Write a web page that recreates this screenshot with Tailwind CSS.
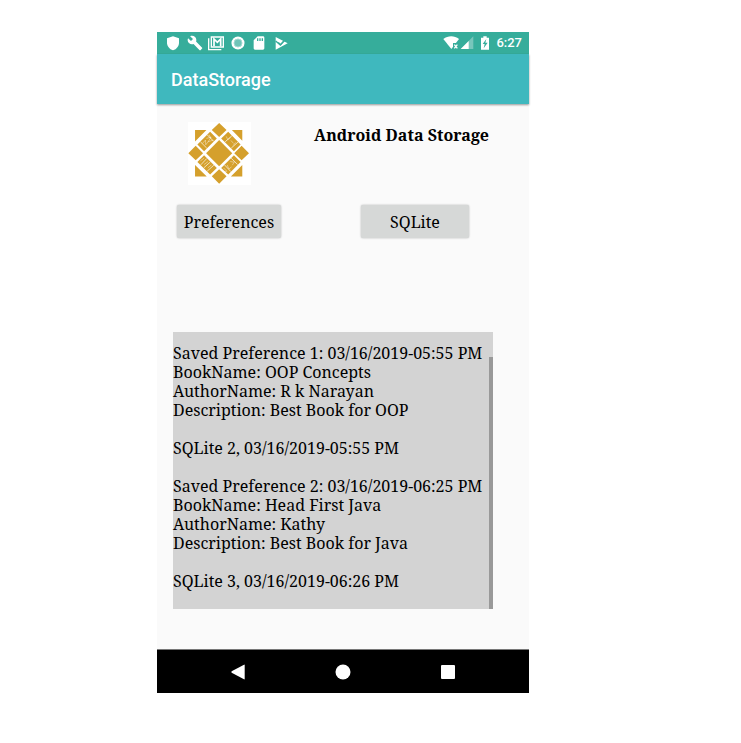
<!DOCTYPE html>
<html lang="en">
<head>
<meta charset="utf-8">
<meta name="viewport" content="width=device-width, initial-scale=1">
<title>DataStorage</title>
<script src="https://cdn.jsdelivr.net/npm/@tailwindcss/browser@4"></script>
</head>
<body class="bg-white text-black font-['Noto_Serif','Droid_Serif','Liberation_Serif',serif]">
<div class="pt-8 pb-12 pl-[157px] pr-[212px]">
  <div class="flex flex-col bg-[#fafafa]">
    <div class="flex h-[22px] items-center justify-between bg-[#36ad9b] pl-2 pr-[7px] text-white">
      <div class="flex w-[124px] items-center justify-between">
        <svg class="size-4" viewBox="0 0 24 24" fill="currentColor" aria-hidden="true"><path d="M12 2 3 5v6.500c0 5 3.500 9.500 9 11.500 5.500-2 9-6.500 9-11.500V5z"/></svg>
        <svg class="size-4" viewBox="0 0 24 24" fill="currentColor" aria-hidden="true"><path d="M22.700 19l-9.100-9.100c.9-2.300.4-5-1.500-6.900-2-2-5-2.400-7.400-1.300L9 6 6 9 1.600 4.700C.4 7.100.9 10.100 2.900 12.100c1.900 1.900 4.600 2.400 6.900 1.500l9.100 9.100c.4.4 1 .4 1.400 0l2.300-2.300c.5-.4.5-1.100.1-1.400z"/></svg>
        <svg class="size-4" viewBox="0 0 24 24" aria-hidden="true"><path d="M1 5v17h19" fill="none" stroke="currentColor" stroke-width="2"/><path d="M5 3h18v15H5z" fill="none" stroke="currentColor" stroke-width="2"/><path d="M9 17V6l5 5 5-5v11" fill="none" stroke="currentColor" stroke-width="2.600"/></svg>
        <svg class="size-4" viewBox="0 0 24 24" aria-hidden="true"><circle cx="12" cy="12" r="9.800" fill="#fff"/><circle cx="12" cy="12" r="6" fill="#6fc4b8" stroke="#a5dad2" stroke-width="1.500"/></svg>
        <svg class="size-4" viewBox="0 0 24 24" fill="currentColor" aria-hidden="true"><path fill-rule="evenodd" d="M18 2h-8L4 8v12c0 1.100.9 2 2 2h12c1.100 0 2-.9 2-2V4c0-1.100-.9-2-2-2zM9 5h2v4H9zm3.500 0h2v4h-2zM16 5h2v4h-2z"/></svg>
        <svg class="size-4" viewBox="0 0 24 24" aria-hidden="true"><path d="M4 3l18 9.500L4 22z" fill="currentColor"/><path d="M4 9l7 6L22 3" fill="none" stroke="#36ad9b" stroke-width="2"/><path d="M8 11l3.500 3.500L18 7" fill="none" stroke="#36ad9b" stroke-width="1.800"/></svg>
      </div>
      <div class="flex items-center">
        <svg class="h-4 w-[17px]" viewBox="0 0 51 48" aria-hidden="true"><path d="M1 12C15 1 34 1 48 12L25 42z" fill="#fff"/><path d="M30 24h21v24H30z" fill="#36ad9b"/><path d="M34 29l9 11m0-11-9 11" stroke="#fff" stroke-width="4"/></svg>
        <svg class="h-4 w-[14px]" viewBox="0 0 42 48" aria-hidden="true"><path d="M2 42 40 4v38z" fill="#77c6bb"/><path d="M2 42 26 18v24z" fill="#fff"/></svg>
        <svg class="ml-1 h-4 w-[14px]" viewBox="0 0 42 48" aria-hidden="true"><path d="M16 4h10v4h7v36H9V8h7z" fill="#fff"/><path d="M25 12 14 27h6l-3 13 12-17h-7z" fill="#36ad9b"/></svg>
        <span class="ml-1 font-[Roboto,sans-serif] text-[13px] font-medium leading-4">6:27</span>
      </div>
    </div>
    <header class="z-10 flex h-[50px] items-center bg-[#3fb8be] px-[14px] pt-0.5 shadow-[0_1px_2px_rgba(0,0,0,0.4)]">
      <h1 class="font-[Roboto,sans-serif] text-lg font-medium text-white">DataStorage</h1>
    </header>
    <main class="pl-4 pr-9 pt-[18px] pb-10">
      <div class="flex items-start justify-between pl-[15px] pr-1">
        <svg class="size-[63px] bg-white" viewBox="25 23 188 188" role="img" aria-label="Logo">
          <g fill="#d5a02c">
            <path d="M118 77l39 39-39 39-39-39z"/>
            <path d="M118 26l22 21-22 21-22-21zM48 94l22 22-22 21-22-21zM185 94l22 22-22 21-22-21zM118 164l22 21-22 22-22-22z"/>
            <path d="M46 47h34L46 81zM156 47h31v32zM46 151v35h35zM187 151v35h-34z"/>
            <path d="M91 52l20 20-38 38-20-20zM145 52l37 38-20 20-38-38zM53 142l20-20 38 38-20 20zM182 142l-20-20-38 38 21 20z"/>
          </g>
          <g fill="none" stroke="#fff" stroke-opacity="0.8" stroke-width="2.500">
            <path d="M62 82l19 19M82 61l20 20M156 64l-20 18M174 83l-20 18M81 132l-18 19M92 142l-20 18M102 152l-20 18M134 151l19 20M154 131l19 19"/>
            <path stroke-width="1.500" d="M68 87l9-10 1 14 8-10M80 72l14-4-9 14 15-5M88 61l5 11M139 66l5 10 8-7M153 78l8 9M160 93l7-9M62 139l11-8M73 150l12-9M84 160l11-9M131 160l10 10-9 3M142 151l5 12 8-6M151 141l12 2-6 9"/>
          </g>
        </svg>
        <h2 class="pt-px text-base font-bold leading-6">Android Data Storage</h2>
      </div>
      <div class="flex justify-between pt-5 pl-1 pr-6">
        <button type="button" class="h-[33px] w-[104px] whitespace-nowrap rounded-xs bg-[#d6d8d7] text-base shadow-[0_0_2px_rgba(0,0,0,0.3)]">Preferences</button>
        <button type="button" class="h-[33px] w-[108px] rounded-xs bg-[#d6d8d7] text-base shadow-[0_0_2px_rgba(0,0,0,0.3)]">SQLite</button>
      </div>
      <section aria-label="Saved data" class="mt-[94px] flex items-end justify-between bg-[#d3d3d3]">
        <div class="whitespace-pre pt-3 pb-[18px] text-base leading-[19px]"><p>Saved Preference 1: 03/16/2019-05:55 PM
BookName: OOP Concepts
AuthorName: R k Narayan
Description: Best Book for OOP

SQLite 2, 03/16/2019-05:55 PM

Saved Preference 2: 03/16/2019-06:25 PM
BookName: Head First Java
AuthorName: Kathy
Description: Best Book for Java

SQLite 3, 03/16/2019-06:26 PM</p></div>
        <div class="h-[252px] w-1 shrink-0 bg-[#999]"></div>
      </section>
    </main>
    <nav aria-label="System" class="flex h-11 items-center justify-between border-t border-[#777] bg-black px-[73px]">
      <button type="button" aria-label="Back"><svg class="size-4" viewBox="0 0 48 48" fill="#fff"><path d="M44 3v42q0 2-2 1L5 26q-2-2 0-4L42 2q2-1 2 1z"/></svg></button>
      <button type="button" aria-label="Home"><svg class="size-4" viewBox="0 0 48 48" fill="#fff"><circle cx="24" cy="24" r="22.500"/></svg></button>
      <button type="button" aria-label="Recent apps"><svg class="size-4" viewBox="0 0 48 48" fill="#fff"><rect x="3" y="3" width="42" height="42" rx="3"/></svg></button>
    </nav>
  </div>
</div>
</body>
</html>
